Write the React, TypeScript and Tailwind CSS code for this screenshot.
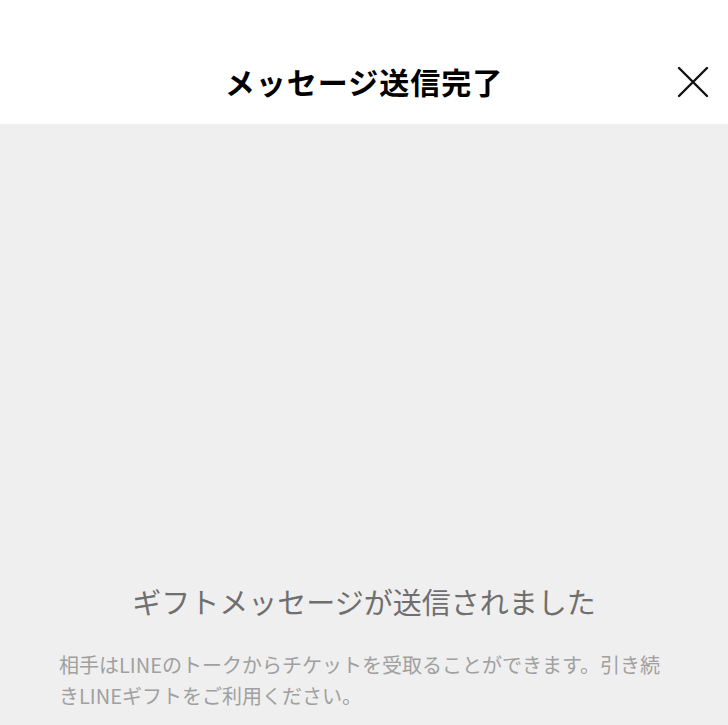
import React from 'react'

export default function App() {
  return (
    <div
      className="w-[728px] h-[725px] overflow-hidden bg-[#efefef] flex flex-col"
      style={{ fontFamily: '"Noto Sans CJK JP", "Noto Sans", sans-serif' }}
    >
      {/* Header */}
      <div className="h-[124px] bg-white flex items-start justify-center relative pt-[59px]">
        <h1 className="text-[30px] leading-[44px] font-bold text-black tracking-[1px]">メッセージ送信完了</h1>
        <button className="absolute right-[19px] top-[66px] w-[32px] h-[32px]" aria-label="閉じる">
          <svg viewBox="0 0 32 32" className="w-[32px] h-[32px]">
            <path d="M2 2 L30 30 M30 2 L2 30" stroke="#111" strokeWidth="2.4" strokeLinecap="round" />
          </svg>
        </button>
      </div>

      {/* Body */}
      <div className="flex-1 flex flex-col pt-[457px] px-[59px]">
        <p className="text-center text-[29px] leading-[40px] text-[#6f6f6f]">ギフトメッセージが送信されました</p>
        <p className="mt-[28px] text-[20px] leading-[31px] text-[#a0a0a0]">
          相手はLINEのトークからチケットを受取ることができます。引き続きLINEギフトをご利用ください。
        </p>
      </div>
    </div>
  )
}
